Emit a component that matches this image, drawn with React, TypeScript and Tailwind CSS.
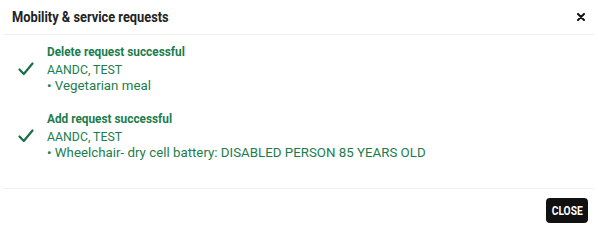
const green = 'text-[#1b7d4c]';

function Check() {
  return (
    <svg width="16" height="14" viewBox="0 0 16 14" className="shrink-0">
      <path d="M1.5 7.5 L5.8 12 L14.5 1.5" fill="none" stroke="#1b6e45" strokeWidth="2.2" strokeLinecap="round" strokeLinejoin="round" />
    </svg>
  );
}

interface ResultProps {
  title: string;
  name: string;
  item: string;
}

function Result({ title, name, item }: ResultProps) {
  return (
    <div className="flex items-center">
      <div className="w-[47px] flex justify-center pl-[4px]">
        <Check />
      </div>
      <div className={`${green} leading-[16px]`}>
        <div className="font-bold text-[13px] mb-[2px] whitespace-nowrap origin-left scale-x-[0.91]">
          {title}
        </div>
        <div className="text-[12.3px] whitespace-nowrap">{name}</div>
        <div className="text-[13.3px] whitespace-nowrap">• {item}</div>
      </div>
    </div>
  );
}

export default function App() {
  return (
    <div className="w-[598px] h-[231px] bg-white flex flex-col" style={{ fontFamily: 'Roboto, "Noto Sans", sans-serif' }}>
      <div className="h-[35px] flex items-center justify-between pl-[8px] pr-[9px] mx-[4px] border-b border-[#efefef]">
        <div className="text-[14px] font-bold text-[#222] whitespace-nowrap origin-left scale-x-[0.915]">
          Mobility &amp; service requests
        </div>
        <svg width="8" height="8" viewBox="0 0 8 8">
          <path d="M1 1 L7 7 M7 1 L1 7" stroke="#111" strokeWidth="2" strokeLinecap="round" />
        </svg>
      </div>
      <div className="flex flex-col gap-[17px] pt-[9px] h-[153px]">
        <Result title="Delete request successful" name="AANDC, TEST" item="Vegetarian meal" />
        <Result title="Add request successful" name="AANDC, TEST" item="Wheelchair- dry cell battery: DISABLED PERSON 85 YEARS OLD" />
      </div>
      <div className="mx-[4px] border-t border-[#efefef] flex-1 flex items-center justify-end pr-[6px]">
        <button className="bg-[#111] text-white rounded-[4px] w-[42px] h-[25px] mt-[1px] flex items-center justify-center">
          <span className="text-[12px] font-bold scale-x-[0.85] inline-block">CLOSE</span>
        </button>
      </div>
    </div>
  );
}
